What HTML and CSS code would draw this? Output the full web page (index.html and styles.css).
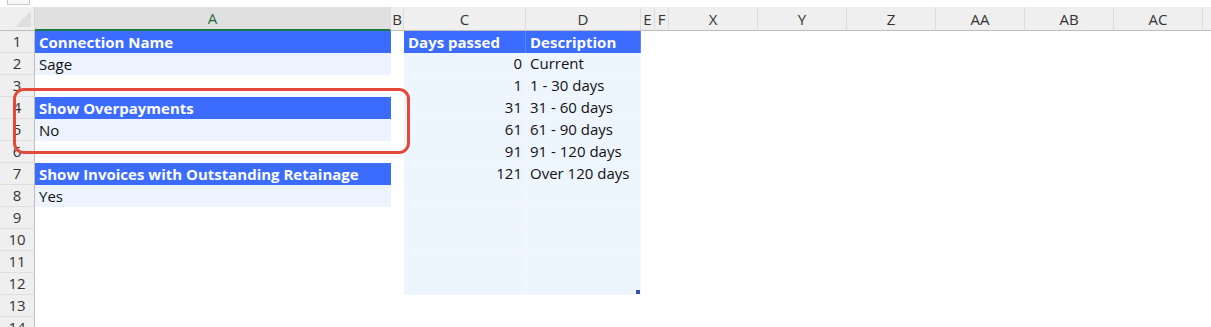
FILE: index.html
```html
<!DOCTYPE html>
<html lang="en">
<head>
  <meta charset="UTF-8">
  <title>Report Settings - Sheet</title>
  <link rel="stylesheet" href="styles.css">
</head>
<body>

  <div class="topbar">
    <div class="name-box"></div>
  </div>

  <div class="sheet-wrap">
    <div class="sheet" id="sheet"></div>
    <div class="highlight"></div>
  </div>

  <script>
    const columns = [
      { name: "A", width: 356, selected: true },
      { name: "B", width: 13 },
      { name: "C", width: 122 },
      { name: "D", width: 115 },
      { name: "E", width: 14 },
      { name: "F", width: 14 },
      { name: "X", width: 89 },
      { name: "Y", width: 89 },
      { name: "Z", width: 89 },
      { name: "AA", width: 89 },
      { name: "AB", width: 89 },
      { name: "AC", width: 89 },
      { name: "", width: 89 }
    ];
    const rowCount = 14;

    const cells = {
      A1: { text: "Connection Name", cls: "head" },
      A2: { text: "Sage", cls: "value" },
      A4: { text: "Show Overpayments", cls: "head" },
      A5: { text: "No", cls: "value" },
      A7: { text: "Show Invoices with Outstanding Retainage", cls: "head" },
      A8: { text: "Yes", cls: "value" },
      C1: { text: "Days passed", cls: "head tcell" },
      D1: { text: "Description", cls: "head tcell" }
    };

    const ageing = [
      [0, "Current"],
      [1, "1 - 30 days"],
      [31, "31 - 60 days"],
      [61, "61 - 90 days"],
      [91, "91 - 120 days"],
      [121, "Over 120 days"]
    ];

    for (let r = 2; r <= 12; r++) {
      const item = ageing[r - 2];
      cells["C" + r] = { text: item ? String(item[0]) : "", cls: "band tcell num" };
      cells["D" + r] = { text: item ? item[1] : "", cls: "band tcell" + (r == 12 ? " last" : "") };
    }

    function buildSheet() {
      const sheet = document.getElementById("sheet");
      sheet.style.gridTemplateColumns = "35px " + columns.map(c => c.width + "px").join(" ");

      const corner = document.createElement("div");
      corner.className = "corner";
      sheet.appendChild(corner);

      columns.forEach(col => {
        const h = document.createElement("div");
        h.className = "col-head" + (col.selected ? " selected" : "");
        h.textContent = col.name;
        sheet.appendChild(h);
      });

      for (let r = 1; r <= rowCount; r++) {
        const rh = document.createElement("div");
        rh.className = "row-head";
        rh.textContent = r;
        sheet.appendChild(rh);

        columns.forEach(col => {
          const cell = document.createElement("div");
          const data = cells[col.name + r];
          cell.className = "cell" + (data ? " " + data.cls : "");
          if (data) cell.textContent = data.text;
          sheet.appendChild(cell);
        });
      }
    }

    buildSheet();
  </script>

</body>
</html>
```

FILE: styles.css
```css
body {
  margin: 0;
  padding: 0;
  background: #fff;
  font-family: "Open Sans", "Liberation Sans", Arial, sans-serif;
  font-size: 15px;
  color: #111;
  overflow: hidden;
}

.topbar {
  height: 7px;
}

.name-box {
  margin-left: 7px;
  width: 21px;
  height: 4px;
  border: 1px solid #c8c8c8;
  border-top: none;
  background: #f7f7f7;
}

.sheet-wrap {
  position: relative;
}

.sheet {
  display: grid;
  grid-auto-rows: 22px;
  grid-template-rows: 24px;
}

.corner {
  background: #efefef;
  border-bottom: 1px solid #bdbdbd;
  border-right: 1px solid #d4d4d4;
  position: relative;
}

.corner::after {
  content: "";
  position: absolute;
  right: 3px;
  bottom: 3px;
  border-left: 16px solid transparent;
  border-bottom: 16px solid #dedede;
}

.col-head {
  background: #efefef;
  border-bottom: 1px solid #bdbdbd;
  border-right: 1px solid #dcdcdc;
  color: #333;
  font-size: 15px;
  display: flex;
  align-items: center;
  justify-content: center;
  overflow: hidden;
}

.col-head.selected {
  background: #e0e0e0;
  color: #1d6e3e;
  border-bottom: 2px solid #1d7a45;
}

.row-head {
  background: #efefef;
  border-right: 1px solid #bdbdbd;
  border-bottom: 1px solid #dedede;
  color: #333;
  font-size: 15px;
  display: flex;
  align-items: center;
  justify-content: center;
  padding-bottom: 1px;
}

.cell {
  display: flex;
  align-items: center;
  padding: 0 4px 1px;
  white-space: nowrap;
  overflow: visible;
  min-width: 0;
}

.head {
  background: #3b6cff;
  color: #fff;
  font-weight: bold;
}

.value {
  background: #edf4ff;
  color: #111;
}

.band {
  background: #edf5ff;
}

.tcell {
  border-right: 1px solid #f3f8ff;
  border-bottom: 1px solid #f3f8ff;
}

.head.tcell {
  border-right: 1px solid #5c86ff;
  border-bottom: none;
}

.num {
  justify-content: flex-end;
  padding-right: 3px;
}

.last {
  position: relative;
}

.last::after {
  content: "";
  position: absolute;
  right: 0;
  bottom: 0;
  width: 4px;
  height: 4px;
  background: #3a4fa8;
}

.highlight {
  position: absolute;
  left: 13px;
  top: 81px;
  width: 391px;
  height: 60px;
  border: 3px solid #e2493a;
  border-radius: 11px;
  pointer-events: none;
}
```
